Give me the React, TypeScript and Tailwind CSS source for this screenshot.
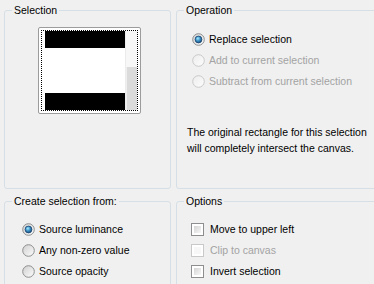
import { ReactNode, useId } from "react";

function GroupBox({
  title,
  className,
  children,
}: {
  title: string;
  className: string;
  children: ReactNode;
}) {
  return (
    <fieldset
      className={`shrink-0 rounded-[3px] border border-[#d5dfe5] px-[7px] ${className}`}
    >
      <legend className="px-[2px] leading-[14px]">{title}</legend>
      {children}
    </fieldset>
  );
}

function Radio({ checked, disabled }: { checked?: boolean; disabled?: boolean }) {
  const id = useId().replace(/:/g, "");
  return (
    <svg width="13" height="13" viewBox="0 0 13 13" className="shrink-0">
      <defs>
        <linearGradient id={`f${id}`} x1="0" y1="0" x2="1" y2="1">
          <stop offset="0" stopColor={disabled ? "#ececec" : "#cfcfcf"} />
          <stop offset="1" stopColor="#fdfdfd" />
        </linearGradient>
        <radialGradient id={`d${id}`} cx="0.4" cy="0.35" r="0.7">
          <stop offset="0" stopColor="#a6ecff" />
          <stop offset="0.5" stopColor="#3a8fc4" />
          <stop offset="1" stopColor="#154a78" />
        </radialGradient>
      </defs>
      <circle
        cx="6.5"
        cy="6.5"
        r="5.8"
        fill={`url(#f${id})`}
        stroke={disabled ? "#c9c9c9" : "#8c8e8f"}
        strokeWidth="1"
      />
      {checked && (
        <circle
          cx="6.5"
          cy="6.5"
          r="3.4"
          fill={`url(#d${id})`}
          stroke="#1b4470"
          strokeWidth="0.8"
        />
      )}
    </svg>
  );
}

function Check({ disabled }: { disabled?: boolean }) {
  return (
    <div
      className={`h-[13px] w-[13px] shrink-0 border p-[2px] ${
        disabled ? "border-[#c9c9c9] bg-white" : "border-[#8c8e8f] bg-white"
      }`}
    >
      <div
        className={`h-full w-full ${
          disabled
            ? "bg-[#f7f7f7]"
            : "bg-linear-to-br from-[#d4d4d4] to-[#f7f7f7]"
        }`}
      />
    </div>
  );
}

function Row({
  children,
  label,
  disabled,
  gap,
}: {
  children: ReactNode;
  label: string;
  disabled?: boolean;
  gap: string;
}) {
  return (
    <div className={`flex h-[21px] items-center ${gap}`}>
      {children}
      <span className={disabled ? "text-[#a3a3a3]" : ""}>{label}</span>
    </div>
  );
}

export default function App() {
  return (
    <div className="h-[284px] w-[374px] overflow-hidden bg-[#f0f0f0] font-['Liberation_Sans',Arial,sans-serif] text-[10.5px] text-black">
      {/* top row */}
      <div className="flex gap-[5px] pl-[4px] pt-[3px]">
        <GroupBox title="Selection" className="h-[186px] w-[167px]">
          <div className="ml-[26px] mt-[10px] h-[87px] w-[103px] rounded-[2px] border border-[#9c9c9c] bg-white p-[2px]">
            <div className="flex h-full w-full border border-dotted border-black">
              <div className="flex w-[83px] flex-col justify-between pl-[3px]">
                <div className="h-[17px] w-[80px] bg-black" />
                <div className="h-[17px] w-[80px] bg-black" />
              </div>
              <div className="flex flex-1 flex-col border-l border-[#ececec]">
                <div className="h-[36px] bg-[#f7f7f7]" />
                <div className="flex-1 border-l border-[#efefef] bg-[#dbdbdb]" />
              </div>
            </div>
          </div>
        </GroupBox>

        <GroupBox title="Operation" className="h-[186px] w-[230px]">
          <div className="ml-[8px] mt-[12px] flex flex-col">
            <Row label="Replace selection" gap="gap-[4px]">
              <Radio checked />
            </Row>
            <Row label="Add to current selection" disabled gap="gap-[4px]">
              <Radio disabled />
            </Row>
            <Row label="Subtract from current selection" disabled gap="gap-[4px]">
              <Radio disabled />
            </Row>
          </div>
          <p className="ml-[3px] mt-[32px] text-[10.5px] leading-[16px]">
            The original rectangle for this selection
            <br />
            will completely intersect the canvas.
          </p>
        </GroupBox>
      </div>

      {/* bottom row */}
      <div className="mt-[5px] flex gap-[5px] pl-[4px]">
        <GroupBox title="Create selection from:" className="h-[120px] w-[167px]">
          <div className="ml-[10px] mt-[11px] flex flex-col">
            <Row label="Source luminance" gap="gap-[4px]">
              <Radio checked />
            </Row>
            <Row label="Any non-zero value" gap="gap-[4px]">
              <Radio />
            </Row>
            <Row label="Source opacity" gap="gap-[4px]">
              <Radio />
            </Row>
          </div>
        </GroupBox>

        <GroupBox title="Options" className="h-[120px] w-[230px]">
          <div className="ml-[7px] mt-[11px] flex flex-col">
            <Row label="Move to upper left" gap="gap-[6px]">
              <Check />
            </Row>
            <Row label="Clip to canvas" disabled gap="gap-[6px]">
              <Check disabled />
            </Row>
            <Row label="Invert selection" gap="gap-[6px]">
              <Check />
            </Row>
          </div>
        </GroupBox>
      </div>
    </div>
  );
}
